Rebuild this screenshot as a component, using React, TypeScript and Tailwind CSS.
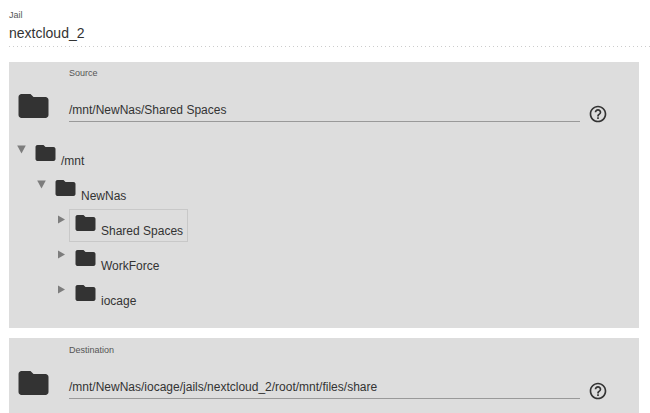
import { useState } from "react";
import { MdFolder, MdHelpOutline } from "react-icons/md";

type Node = { name: string; open: boolean; level: string };

const nodes: Node[] = [
  { name: "/mnt", open: true, level: "pl-[8px]" },
  { name: "NewNas", open: true, level: "pl-[28px]" },
  { name: "Shared Spaces", open: false, level: "pl-[48px]" },
  { name: "WorkForce", open: false, level: "pl-[48px]" },
  { name: "iocage", open: false, level: "pl-[48px]" },
];

function Toggle({ open }: { open: boolean }) {
  return (
    <svg width="9" height="9" viewBox="0 0 9 9" className="mt-[5px] shrink-0 fill-[#7d7d7d]">
      {open ? <path d="M0.2 0.5h8.6L4.5 8.5z" /> : <path d="M1 0.5v8L8 4.5z" />}
    </svg>
  );
}

function PathField({ label, value }: { label: string; value: string }) {
  return (
    <div className="flex h-[75px]">
      <MdFolder size={36} className="ml-[6px] mt-[26px] shrink-0 translate-x-[0.5px]" />
      <div className="ml-[18px] w-[511px]">
        <div className="h-[22px] pt-[5px] text-[9px] leading-[12px] text-[#555]">{label}</div>
        <div className="flex h-[38px] items-end border-b border-[#999] pb-[3px] text-[12px] leading-[16px]">
          {value}
        </div>
      </div>
      <MdHelpOutline size={20} className="ml-[8px] mt-[42px] shrink-0" />
    </div>
  );
}

export default function App() {
  const [selected, setSelected] = useState("Shared Spaces");

  return (
    <div className="h-[413px] w-[650px] overflow-hidden bg-white pl-[9px] font-['Liberation_Sans',sans-serif] text-[#333]">
      {/* Jail name */}
      <div className="flex h-[62px] flex-col">
        <div className="pt-[9px] text-[9px] leading-[12px] text-[#555]">Jail</div>
        <div className="mt-[4px] text-[14px] leading-[16px]">nextcloud_2</div>
        <div className="mt-[5px] h-px w-full bg-[repeating-linear-gradient(90deg,#ccc_0_1px,transparent_1px_4px)]" />
      </div>

      {/* Source */}
      <section className="h-[266px] w-[630px] bg-[#ddd]">
        <PathField label="Source" value="/mnt/NewNas/Shared Spaces" />
        <div className="pt-[3px]">
          {nodes.map(n => (
            <div key={n.name} className={`flex h-[35px] ${n.level}`}>
              <Toggle open={n.open} />
              <button
                onClick={() => setSelected(n.name)}
                className={`ml-[3px] mt-[-1px] flex h-[33px] items-start border pl-[3px] pr-[4px] ${
                  selected === n.name ? "border-[#c8c8c8]" : "border-transparent"
                }`}
              >
                <MdFolder size={24} className="mt-px shrink-0 translate-x-[0.5px]" />
                <span className="ml-[4px] mt-[13px] text-[12px] leading-[16px]">{n.name}</span>
              </button>
            </div>
          ))}
        </div>
      </section>

      {/* Destination */}
      <section className="mt-[10px] h-[75px] w-[630px] bg-[#ddd] pt-px">
        <PathField label="Destination" value="/mnt/NewNas/iocage/jails/nextcloud_2/root/mnt/files/share" />
      </section>
    </div>
  );
}
